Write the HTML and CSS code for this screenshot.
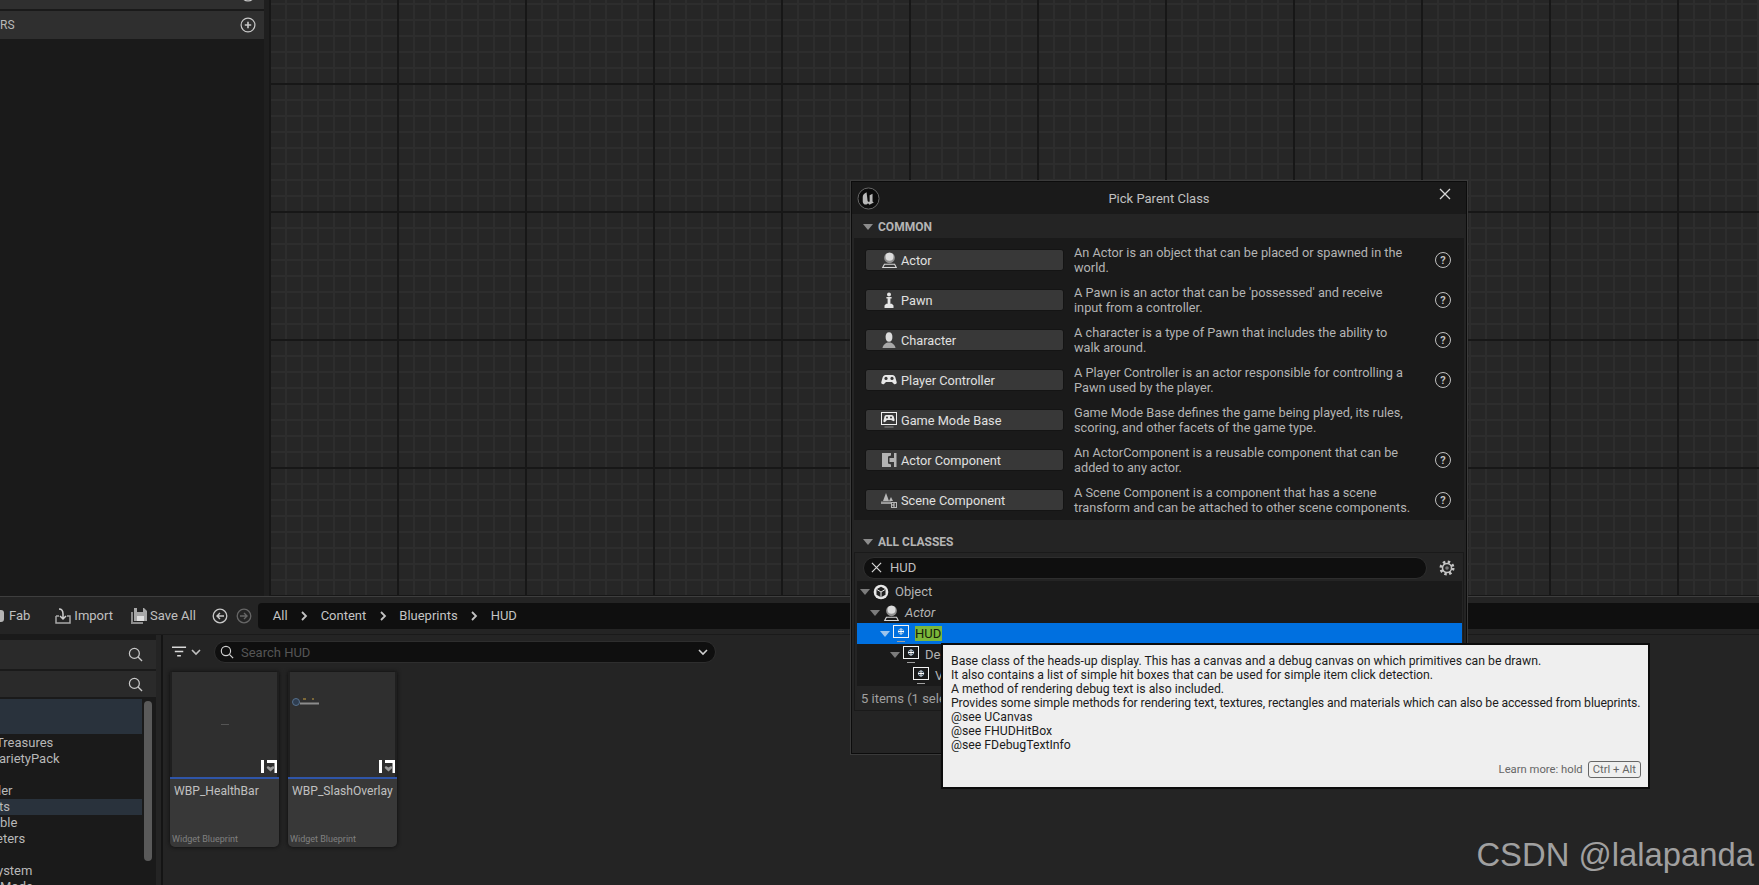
FILE: index.html
```html
<!DOCTYPE html>
<html lang="en">

<head>
    <meta charset="UTF-8">
    <title>Pick Parent Class</title>
    <link rel="stylesheet" href="styles.css">
</head>

<body>
    <svg class="sprites" width="0" height="0">
        <symbol id="i-plus" viewBox="0 0 16 16">
            <circle cx="8" cy="8" r="6.9" fill="none" stroke="currentColor" stroke-width="1.2" />
            <path d="M8 4.8v6.4M4.8 8h6.4" stroke="currentColor" stroke-width="1.6" />
        </symbol>
        <symbol id="i-actor" viewBox="0 0 16 16">
            <circle cx="8.5" cy="5.8" r="5.400" fill="#8f8f8f" />
            <circle cx="8.5" cy="4.800" r="4" fill="#dcdcdc" />
            <path d="M3.4 12.2h10.2l1.7 3.3H1.7z" fill="none" stroke="#d8d8d8" stroke-width="1.1" />
        </symbol>
        <symbol id="i-pawn" viewBox="0 0 16 16">
            <circle cx="8" cy="2.4" r="2" fill="#e6e6e6" />
            <path d="M5.4 5h5.2v1.4H9.4v5.4h1.4l1.7 1.6V16h-9v-2.6l1.7-1.6h1.4V6.400H5.400z" fill="#e6e6e6" />
        </symbol>
        <symbol id="i-character" viewBox="0 0 16 16">
            <ellipse cx="8" cy="5" rx="3.400" ry="4.700" fill="#dcdcdc" />
            <path d="M1.500 16c.6-3.700 3.600-5 5-5.600h3c1.400.6 4.400 1.900 5 5.600z" fill="#a8a8a8" />
        </symbol>
        <symbol id="i-pad" viewBox="0 0 16 16">
            <path d="M4.600 3h6.800c1.500 0 2.500 1 3 2.600l1.300 4.600c.4 1.700-1.800 2.900-3 1.500L11 10H5l-1.700 1.700c-1.200 1.400-3.400.2-3-1.500l1.300-4.600C2.100 4 3.100 3 4.600 3z" fill="#e8e8e8" />
            <circle cx="5" cy="6.400" r="1.600" fill="#383838" />
            <circle cx="11" cy="6.400" r="1.600" fill="#383838" />
        </symbol>
        <symbol id="i-mode" viewBox="0 0 16 16">
            <rect x="0.500" y="0.500" width="15" height="12" fill="none" stroke="#f0f0f0" />
            <path d="M5.200 3h5.600c1 0 1.700.7 2 1.800l.8 3c.3 1.200-1.200 1.900-2 1L10 8H6L4.400 9.800c-.8.900-2.300.2-2-1l.8-3C3.500 3.700 4.200 3 5.200 3z" fill="#e8e8e8" />
            <circle cx="6" cy="5.400" r="1" fill="#383838" />
            <circle cx="10" cy="5.400" r="1" fill="#383838" />
            <path d="M3.500 15h9" stroke="#8a8a8a" />
        </symbol>
        <symbol id="i-comp" viewBox="0 0 16 16">
            <path d="M1 1h9v2.500L7 4.500v7l3 1v2.500H1z" fill="#b4b4b4" />
            <path d="M8.500 6H13V1h2.500v14H13v-5H8.500z" fill="#b4b4b4" />
        </symbol>
        <symbol id="i-scene" viewBox="0 0 16 16">
            <path d="M5 1l3 8H2zM10 5l2 4H8z" fill="#b8b8b8" />
            <path d="M0 9.500h10v2.500H0z" fill="#9a9a9a" />
            <rect x="10.500" y="10.500" width="5" height="5" fill="#383838" stroke="#b8b8b8" />
            <path d="M14 12h-2v2h2" fill="none" stroke="#d0d0d0" />
        </symbol>
        <symbol id="i-object" viewBox="0 0 16 16">
            <circle cx="8" cy="8" r="7.300" fill="#e8e8e8" />
            <path d="M8 2.800l4.500 2.500v5.400L8 13.300l-4.500-2.600V5.300z" fill="#222" />
            <path d="M3.500 5.300L8 8l4.500-2.700M8 8v5.300" stroke="#e8e8e8" fill="none" />
        </symbol>
        <symbol id="i-hud" viewBox="0 0 16 18">
            <rect x="0.500" y="0.500" width="15" height="12" fill="none" stroke="#f4f4f4" />
            <circle cx="8" cy="6.500" r="2.600" fill="none" stroke="#9fb8d0" />
            <path d="M8 3.500v6M5 6.500h6" stroke="#fff" />
            <path d="M4 16.500h8" stroke="#a0a0a0" />
        </symbol>
        <symbol id="i-search" viewBox="0 0 16 16">
            <circle cx="6.800" cy="6.800" r="5.300" fill="none" stroke="currentColor" stroke-width="1.300" />
            <path d="M10.700 10.700L15 15" stroke="currentColor" stroke-width="1.400" />
        </symbol>
        <symbol id="i-x" viewBox="0 0 12 12">
            <path d="M1 1l10 10M11 1L1 11" stroke="currentColor" stroke-width="1.300" />
        </symbol>
        <symbol id="i-chev" viewBox="0 0 10 10">
            <path d="M3 1l4 4-4 4" fill="none" stroke="currentColor" stroke-width="1.800" />
        </symbol>
        <symbol id="i-down" viewBox="0 0 10 10">
            <path d="M1 3l4 4 4-4" fill="none" stroke="currentColor" stroke-width="1.600" />
        </symbol>
        <symbol id="i-widget" viewBox="0 0 16 13">
            <path d="M0 0h3v13H0zM6 0h10v3H6zM13.500 3H16v10h-2.500z" fill="#fff" />
            <path d="M9.500 11.500L6 8.200c-.8-1 .6-2.400 1.700-1.600l1.800 1 1.800-1c1.100-.8 2.500.6 1.700 1.600z" fill="#9a9a9a" />
        </symbol>
    </svg>

    <div class="editor">
        <div class="top-area">
            <div class="side-panel">
                <div class="side-row side-row-cut">
                    <svg class="plus-icon"><use href="#i-plus" /></svg>
                </div>
                <div class="side-row">
                    <span>RS</span>
                    <svg class="plus-icon"><use href="#i-plus" /></svg>
                </div>
            </div>
            <div class="graph"></div>
        </div>

        <div class="browser">
            <div class="toolbar">
                <div class="tool tool-fab">
                    <span class="fab-mark"></span>
                    <span>Fab</span>
                </div>
                <div class="tool tool-import">
                    <svg class="tool-icon" viewBox="0 0 16 16">
                        <path d="M1 8v7h14V8h-3M4 8H1" fill="none" stroke="#a8a8a8" stroke-width="1.500" />
                        <path d="M4 1c3 0 4 2 4 5V11M5 8l3 3 3-3" fill="none" stroke="#d0d0d0" stroke-width="1.500" />
                    </svg>
                    <span>Import</span>
                </div>
                <div class="tool tool-save">
                    <svg class="tool-icon" viewBox="0 0 16 16">
                        <path d="M0 4h2v10h10v2H0z" fill="#8c8c8c" />
                        <path d="M3 0h10l3 3v10H3z" fill="#a8a8a8" />
                        <path d="M6 0h6v4H6z" fill="#242424" />
                        <path d="M6 8h7v5H6z" fill="#e0e0e0" />
                    </svg>
                    <span>Save All</span>
                </div>
                <svg class="nav-icon" viewBox="0 0 16 16">
                    <circle cx="8" cy="8" r="6.800" fill="none" stroke="#c8c8c8" stroke-width="1.300" />
                    <path d="M12 8H5M8 5L5 8l3 3" fill="none" stroke="#c8c8c8" stroke-width="1.400" />
                </svg>
                <svg class="nav-icon" viewBox="0 0 16 16">
                    <circle cx="8" cy="8" r="6.800" fill="none" stroke="#666" stroke-width="1.300" />
                    <path d="M4 8h7M8 5l3 3-3 3" fill="none" stroke="#666" stroke-width="1.400" />
                </svg>
                <div class="crumbs">
                    <span>All</span>
                    <svg class="crumb-chev"><use href="#i-chev" /></svg>
                    <span>Content</span>
                    <svg class="crumb-chev"><use href="#i-chev" /></svg>
                    <span>Blueprints</span>
                    <svg class="crumb-chev"><use href="#i-chev" /></svg>
                    <span>HUD</span>
                </div>
            </div>

            <div class="browser-body">
                <div class="sources">
                    <div class="source-search">
                        <svg class="search-icon"><use href="#i-search" /></svg>
                    </div>
                    <div class="source-search">
                        <svg class="search-icon"><use href="#i-search" /></svg>
                    </div>
                    <div class="source-tree">
                        <div class="scrollbar"></div>
                        <div class="source-sel-big"></div>
                        <div class="source-row cut-4">Treasures</div>
                        <div class="source-row cut-1">arietyPack</div>
                        <div class="source-row"></div>
                        <div class="source-row cut-2">ler</div>
                        <div class="source-row source-sel cut-1">ts</div>
                        <div class="source-row">ble</div>
                        <div class="source-row cut-4">eters</div>
                        <div class="source-row"></div>
                        <div class="source-row cut-3">ystem</div>
                        <div class="source-row">Mode</div>
                    </div>
                </div>

                <div class="assets">
                    <div class="asset-filter">
                        <svg class="filter-icon" viewBox="0 0 16 12">
                            <path d="M0 1h15M3 5.500h9M5.500 10h4" stroke="#d8d8d8" stroke-width="1.600" />
                        </svg>
                        <svg class="filter-down"><use href="#i-down" /></svg>
                        <div class="asset-search">
                            <svg class="asset-search-icon"><use href="#i-search" /></svg>
                            <span class="asset-search-text">Search HUD</span>
                            <svg class="asset-search-down"><use href="#i-down" /></svg>
                        </div>
                    </div>
                    <div class="tiles">
                        <div class="tile">
                            <div class="thumb">
                                <span class="thumb-dash"></span>
                                <svg class="widget-mark"><use href="#i-widget" /></svg>
                            </div>
                            <div class="tile-info">
                                <span class="tile-name">WBP_HealthBar</span>
                                <span class="tile-type">Widget Blueprint</span>
                            </div>
                        </div>
                        <div class="tile">
                            <div class="thumb">
                                <svg class="overlay-preview" viewBox="0 0 28 10">
                                    <circle cx="4" cy="5" r="3.500" fill="#2e3d50" stroke="#56708c" />
                                    <path d="M8 6.500h19" stroke="#8c8c8c" stroke-width="2" />
                                    <path d="M11 2h3M20 2h2" stroke="#c8a040" stroke-width="1.200" />
                                </svg>
                                <svg class="widget-mark"><use href="#i-widget" /></svg>
                            </div>
                            <div class="tile-info">
                                <span class="tile-name">WBP_SlashOverlay</span>
                                <span class="tile-type">Widget Blueprint</span>
                            </div>
                        </div>
                    </div>
                </div>
            </div>
        </div>
    </div>

    <!-- Pick Parent Class window -->
    <div class="dialog">
        <div class="dialog-title">
            <svg class="ue-logo" viewBox="0 0 24 24">
                <circle cx="12" cy="12" r="11" fill="#0c0c0c" stroke="#6a6a6a" />
                <path d="M10 5.500C7.500 6.500 6 8.500 6 10.500v4.500c0 2 1.500 3.300 3 3.300 1.100 0 1.900-.5 2.500-1.300l1.500 1.500 4.500-2.300-1.300-1V7l-3 1.700v6.300c-.7.600-2.200.4-2.200-1z" fill="#b8b8b8" />
            </svg>
            <span>Pick Parent Class</span>
            <svg class="close-icon"><use href="#i-x" /></svg>
        </div>

        <div class="section-head section-common">
            <span class="tri"></span>
            <span>COMMON</span>
        </div>
        <div class="common-panel">
            <div class="class-row">
                <div class="class-btn"><svg class="class-icon"><use href="#i-actor" /></svg><span>Actor</span></div>
                <p class="class-desc">An Actor is an object that can be placed or spawned in the world.</p>
                <span class="help">?</span>
            </div>
            <div class="class-row">
                <div class="class-btn"><svg class="class-icon"><use href="#i-pawn" /></svg><span>Pawn</span></div>
                <p class="class-desc">A Pawn is an actor that can be 'possessed' and receive input from a controller.</p>
                <span class="help">?</span>
            </div>
            <div class="class-row">
                <div class="class-btn"><svg class="class-icon"><use href="#i-character" /></svg><span>Character</span></div>
                <p class="class-desc">A character is a type of Pawn that includes the ability to walk around.</p>
                <span class="help">?</span>
            </div>
            <div class="class-row">
                <div class="class-btn"><svg class="class-icon"><use href="#i-pad" /></svg><span>Player Controller</span></div>
                <p class="class-desc">A Player Controller is an actor responsible for controlling a Pawn used by the player.</p>
                <span class="help">?</span>
            </div>
            <div class="class-row">
                <div class="class-btn"><svg class="class-icon"><use href="#i-mode" /></svg><span>Game Mode Base</span></div>
                <p class="class-desc">Game Mode Base defines the game being played, its rules, scoring, and other facets of the game type.</p>
            </div>
            <div class="class-row">
                <div class="class-btn"><svg class="class-icon"><use href="#i-comp" /></svg><span>Actor Component</span></div>
                <p class="class-desc">An ActorComponent is a reusable component that can be added to any actor.</p>
                <span class="help">?</span>
            </div>
            <div class="class-row">
                <div class="class-btn"><svg class="class-icon"><use href="#i-scene" /></svg><span>Scene Component</span></div>
                <p class="class-desc">A Scene Component is a component that has a scene transform and can be attached to other scene components.</p>
                <span class="help">?</span>
            </div>
        </div>

        <div class="section-head section-all">
            <span class="tri"></span>
            <span>ALL CLASSES</span>
        </div>
        <div class="classes-panel">
            <div class="class-filter">
                <div class="class-search">
                    <svg class="clear-icon"><use href="#i-x" /></svg>
                    <span>HUD</span>
                </div>
                <svg class="gear" viewBox="0 0 16 16">
                    <circle cx="8" cy="8" r="6" fill="none" stroke="#c4c4c4" stroke-width="3" stroke-dasharray="2.360 2.352" />
                    <circle cx="8" cy="8" r="4.500" fill="none" stroke="#c4c4c4" stroke-width="1.500" />
                    <circle cx="8" cy="8" r="1.800" fill="#777" />
                </svg>
            </div>
            <div class="class-tree">
                <div class="tree-row lv0"><span class="tree-tri"></span><svg class="tree-icon"><use href="#i-object" /></svg><span>Object</span></div>
                <div class="tree-row lv1"><span class="tree-tri"></span><svg class="tree-icon"><use href="#i-actor" /></svg><em>Actor</em></div>
                <div class="tree-row lv2 tree-sel"><span class="tree-tri"></span><svg class="tree-icon"><use href="#i-hud" /></svg><span class="match">HUD</span></div>
                <div class="tree-row lv3"><span class="tree-tri"></span><svg class="tree-icon"><use href="#i-hud" /></svg><span>De</span></div>
                <div class="tree-row lv4"><span class="tree-tri tree-tri-none"></span><svg class="tree-icon"><use href="#i-hud" /></svg><span>V</span></div>
            </div>
            <div class="class-count">5 items (1 sele</div>
        </div>
    </div>

    <div class="tooltip">
        <p class="tooltip-text">Base class of the heads-up display. This has a canvas and a debug canvas on which primitives can be drawn.
It also contains a list of simple hit boxes that can be used for simple item click detection.
A method of rendering debug text is also included.
<span class="tight-line">Provides some simple methods for rendering text, textures, rectangles and materials which can also be accessed from blueprints.</span>
@see UCanvas
@see FHUDHitBox
@see FDebugTextInfo</p>
        <div class="tooltip-foot">
            <span>Learn more: hold</span>
            <span class="keys">Ctrl + Alt</span>
        </div>
    </div>

    <div class="watermark">CSDN @lalapanda</div>
</body>

</html>
```

FILE: styles.css
```css
* {
    box-sizing: border-box;
}

html,
body {
    margin: 0;
    height: 100%;
    overflow: hidden;
    background-color: #242424;
}

body {
    font-family: Roboto, "Liberation Sans", sans-serif;
    font-size: 13px;
    color: #c0c0c0;
}

.sprites {
    position: absolute;
}

svg {
    display: block;
    flex: none;
}

.editor {
    height: 885px;
    display: flex;
    flex-direction: column;
    overflow: hidden;
}

/* top part: side panel + blueprint graph */
.top-area {
    height: 596px;
    flex: none;
    display: flex;
    background-color: #1f1f1f;
}

.side-panel {
    width: 264px;
    margin-right: 5px;
    background-color: #1a1a1a;
}

.side-row {
    height: 28px;
    margin-bottom: 0;
    padding: 0 8px 0 0;
    display: flex;
    align-items: center;
    justify-content: space-between;
    background-color: #2f2f2f;
    font-size: 12px;
    color: #b8b8b8;
}

.side-row-cut {
    height: 9px;
    margin-bottom: 2px;
    align-items: flex-end;
    justify-content: flex-end;
    overflow: hidden;
}

.side-row-cut .plus-icon {
    margin-bottom: 7px;
}

.plus-icon {
    width: 16px;
    height: 16px;
    color: #c8c8c8;
}

.graph {
    flex: 1;
    background-color: #262626;
    background-image:
        linear-gradient(to right, #171717 2px, transparent 2px),
        linear-gradient(to bottom, #171717 2px, transparent 2px),
        linear-gradient(to right, #2d2d2d 2px, transparent 2px),
        linear-gradient(to bottom, #2d2d2d 2px, transparent 2px);
    background-size: 128px 128px, 128px 128px, 16px 16px, 16px 16px;
    background-position: 0 0, 0 83px, 0 0, 0 3px;
}

/* content browser */
.browser {
    flex: 1;
    min-height: 0;
    display: flex;
    flex-direction: column;
    background-color: #242424;
    border-top: 1px solid #3e3e3e;
}

.toolbar {
    height: 38px;
    padding: 6px 0 6px 0;
    display: flex;
    align-items: center;
    flex: none;
    background-color: #242424;
    border-bottom: 1px solid #1a1a1a;
}

.tool {
    display: flex;
    align-items: center;
    gap: 3px;
    color: #c0c0c0;
}

.fab-mark {
    width: 4px;
    height: 12px;
    margin-right: 2px;
    background-color: #b4b4b4;
    border-radius: 0 3px 3px 0;
}

.tool-icon {
    width: 16px;
    height: 16px;
}

.tool-import {
    margin-left: 25px;
}

.tool-save {
    margin-left: 18px;
}

.nav-icon {
    width: 16px;
    height: 16px;
    margin-left: 16px;
}

.nav-icon+.nav-icon {
    margin-left: 8px;
}

.crumbs {
    flex: 1;
    height: 26px;
    margin-left: 6px;
    padding-left: 15px;
    display: flex;
    align-items: center;
    background-color: #0f0f0f;
    border-radius: 4px 0 0 4px;
    color: #c4c4c4;
}

.crumb-chev {
    width: 10px;
    height: 10px;
    margin: 0 11.5px;
    color: #c4c4c4;
}

.browser-body {
    flex: 1;
    display: flex;
    min-height: 0;
}

.sources {
    width: 156px;
    margin-right: 5px;
    padding-top: 5px;
    flex: none;
    background-color: #1a1a1a;
}

.source-search {
    height: 29px;
    margin-bottom: 2px;
    padding-right: 13px;
    display: flex;
    align-items: center;
    justify-content: flex-end;
    background-color: #2a2a2a;
    color: #c8c8c8;
}

.source-search+.source-search {
    height: 26px;
    margin-bottom: 2px;
}

.search-icon {
    width: 15px;
    height: 15px;
}

.source-tree {
    position: relative;
    padding-right: 14px;
}

.scrollbar {
    position: absolute;
    right: 4px;
    top: 2px;
    width: 8px;
    height: 160px;
    border-radius: 4px;
    background-color: #5a5a5a;
}

.source-sel-big {
    height: 35px;
    margin-bottom: 1px;
    background-color: #29323c;
}

.source-row {
    height: 16px;
    line-height: 16px;
    white-space: nowrap;
    overflow: hidden;
    color: #b8b8b8;
}

/* names are cut off by the left edge of the shot */
.cut-1 {
    text-indent: -1px;
}

.cut-2 {
    text-indent: -2px;
}

.cut-3 {
    text-indent: -3px;
}

.cut-4 {
    text-indent: -4px;
}

.source-sel {
    background-color: #29323c;
}

.assets {
    flex: 1;
    border-left: 2px solid #141414;
    padding-left: 7px;
}

.asset-filter {
    height: 34px;
    margin-bottom: 3px;
    display: flex;
    align-items: center;
}

.filter-icon {
    width: 15px;
    height: 12px;
    margin-left: 2px;
}

.filter-down {
    width: 10px;
    height: 10px;
    margin-left: 4px;
    color: #c0c0c0;
}

.asset-search {
    width: 502px;
    height: 22px;
    margin-left: 13px;
    padding: 0 7px 0 5px;
    display: flex;
    align-items: center;
    background-color: #0f0f0f;
    border: 1px solid #2e2e2e;
    border-radius: 11px;
}

.asset-search-icon {
    width: 14px;
    height: 14px;
    color: #d0d0d0;
}

.asset-search-text {
    flex: 1;
    margin-left: 7px;
    color: #555;
}

.asset-search-down {
    width: 10px;
    height: 10px;
    color: #d0d0d0;
}

.tiles {
    display: flex;
    gap: 9px;
}

.tile {
    width: 109px;
    height: 175px;
    display: flex;
    flex-direction: column;
    background-color: #1f1f1f;
    border-radius: 0 0 5px 5px;
    box-shadow: 0 0 4px #0c0c0c;
}

.thumb {
    position: relative;
    height: 105px;
    margin: 0 2px;
    background-color: #2f2f2f;
    border-bottom: 0;
}

.widget-mark {
    position: absolute;
    right: 0;
    bottom: 4px;
    width: 16px;
    height: 13px;
}

.thumb-dash {
    position: absolute;
    left: 49px;
    top: 52px;
    width: 8px;
    height: 1px;
    background-color: #555;
}

.overlay-preview {
    position: absolute;
    left: 2px;
    top: 25px;
    width: 28px;
    height: 10px;
}

.tile-info {
    flex: 1;
    padding: 4px 2px 3px 2px;
    display: flex;
    flex-direction: column;
    justify-content: space-between;
    background-color: #383838;
    border-top: 2px solid #2f55a8;
    border-radius: 0 0 5px 5px;
}

.tile-name {
    padding-left: 2px;
    font-size: 12.1px;
    line-height: 16px;
    color: #c0c0c0;
    white-space: nowrap;
}

.tile-type {
    font-size: 9px;
    color: #808080;
}

/* Pick Parent Class window, floats over the editor */
.dialog {
    position: absolute;
    left: 851px;
    top: 181px;
    width: 616px;
    height: 573px;
    background-color: #242424;
    border: 1px solid #0c0c0c;
    outline: 1px solid #3a3a3a;
}

.dialog-title {
    position: relative;
    height: 32px;
    display: flex;
    align-items: center;
    justify-content: center;
    background-color: #1a1a1a;
    color: #c0c0c0;
}

.ue-logo {
    position: absolute;
    left: 5px;
    top: 5px;
    width: 23px;
    height: 23px;
}

.close-icon {
    position: absolute;
    right: 15px;
    top: 6px;
    width: 12px;
    height: 12px;
    color: #d8d8d8;
}

.section-head {
    padding-left: 11px;
    display: flex;
    align-items: center;
    gap: 5px;
    font-size: 12px;
    font-weight: 700;
    color: #b4b4b4;
}

.section-common {
    height: 24px;
    padding-top: 2px;
}

.section-all {
    height: 32px;
    padding-top: 11px;
}

.tri {
    width: 0;
    height: 0;
    border-left: 5px solid transparent;
    border-right: 5px solid transparent;
    border-top: 6px solid #8c8c8c;
}

.common-panel {
    margin: 0 2px;
    padding-top: 2px;
    height: 282px;
    background-color: #1a1a1a;
}

.class-row {
    height: 40px;
    padding-left: 11px;
    display: flex;
    align-items: center;
}

.class-btn {
    width: 199px;
    height: 22px;
    padding-left: 15px;
    display: flex;
    align-items: center;
    gap: 4px;
    flex: none;
    background-color: #383838;
    border: 1px solid #141414;
    border-radius: 3px;
    font-size: 12.75px;
    color: #e0e0e0;
}

.class-icon {
    width: 16px;
    height: 16px;
}

.class-desc {
    width: 338px;
    margin: 0 0 0 10px;
    flex: none;
    font-size: 12.75px;
    line-height: 15px;
    color: #b4b4b4;
}

.help {
    width: 16px;
    height: 16px;
    margin-left: 23px;
    display: flex;
    align-items: center;
    justify-content: center;
    flex: none;
    border: 1.4px solid #c0c0c0;
    border-radius: 50%;
    font-size: 11px;
    font-weight: 700;
    color: #c0c0c0;
}

.classes-panel {
    margin: 0 2px;
    height: 159px;
    display: flex;
    flex-direction: column;
    border: 1px solid #1a1a1a;
}

.class-filter {
    height: 28px;
    padding: 4px 0 0 8px;
    display: flex;
    align-items: flex-start;
}

.class-search {
    width: 564px;
    height: 22px;
    padding-left: 7px;
    padding-bottom: 1px;
    display: flex;
    align-items: center;
    gap: 8px;
    background-color: #0f0f0f;
    border: 1px solid #2e2e2e;
    border-radius: 11px;
    color: #c0c0c0;
}

.clear-icon {
    width: 11px;
    height: 11px;
    color: #d8d8d8;
}

.gear {
    width: 16px;
    height: 16px;
    margin: 3px 0 0 12px;
}

.class-tree {
    margin: 0 1px 0 2px;
    height: 105px;
    background-color: #1a1a1a;
}

.tree-row {
    height: 21px;
    display: flex;
    align-items: center;
    color: #b4b4b4;
}

.lv0 {
    padding-left: 3px;
}

.lv1 {
    padding-left: 13px;
}

.lv2 {
    padding-left: 23px;
}

.lv3 {
    padding-left: 33px;
}

.lv4 {
    padding-left: 43px;
}

.tree-tri {
    width: 0;
    height: 0;
    margin-right: 3px;
    border-left: 5px solid transparent;
    border-right: 5px solid transparent;
    border-top: 6px solid #7c7c7c;
}

.tree-tri-none {
    border-top-color: transparent;
}

.tree-icon {
    width: 16px;
    height: 18px;
    margin-right: 6px;
}

.tree-row em {
    font-style: italic;
}

.tree-sel {
    background-color: #0070e0;
}

.tree-sel .tree-tri {
    border-top-color: #9cc4ec;
}

.match {
    height: 15px;
    padding-right: 1px;
    line-height: 15px;
    background-color: #7cb73a;
    color: #14200a;
}

.class-count {
    flex: 1;
    padding-left: 6px;
    display: flex;
    align-items: center;
    color: #a0a0a0;
}

/* tooltip hangs over the dialog */
.tooltip {
    position: absolute;
    left: 941px;
    top: 643px;
    width: 709px;
    height: 146px;
    padding: 9px 7px 8px 8px;
    display: flex;
    flex-direction: column;
    justify-content: flex-start;
    background-color: #efefef;
    border: 2px solid #0c0c0c;
    color: #1c1c1c;
}

.tooltip-text {
    margin: 0;
    font-size: 12.25px;
    line-height: 14px;
    white-space: pre;
}

.tight-line {
    letter-spacing: -0.105px;
}

.tooltip-foot {
    margin-top: 9px;
    display: flex;
    align-items: center;
    justify-content: flex-end;
    gap: 5px;
    font-size: 11.25px;
    color: #666;
}

.keys {
    height: 17px;
    padding: 0 4px;
    line-height: 15px;
    border: 1px solid #666;
    border-radius: 3px;
}

.watermark {
    position: absolute;
    right: 5px;
    top: 834px;
    font-family: "Liberation Sans", Arial, sans-serif;
    font-size: 32.8px;
    line-height: 42px;
    color: #a0a0a0;
    white-space: nowrap;
}
```
